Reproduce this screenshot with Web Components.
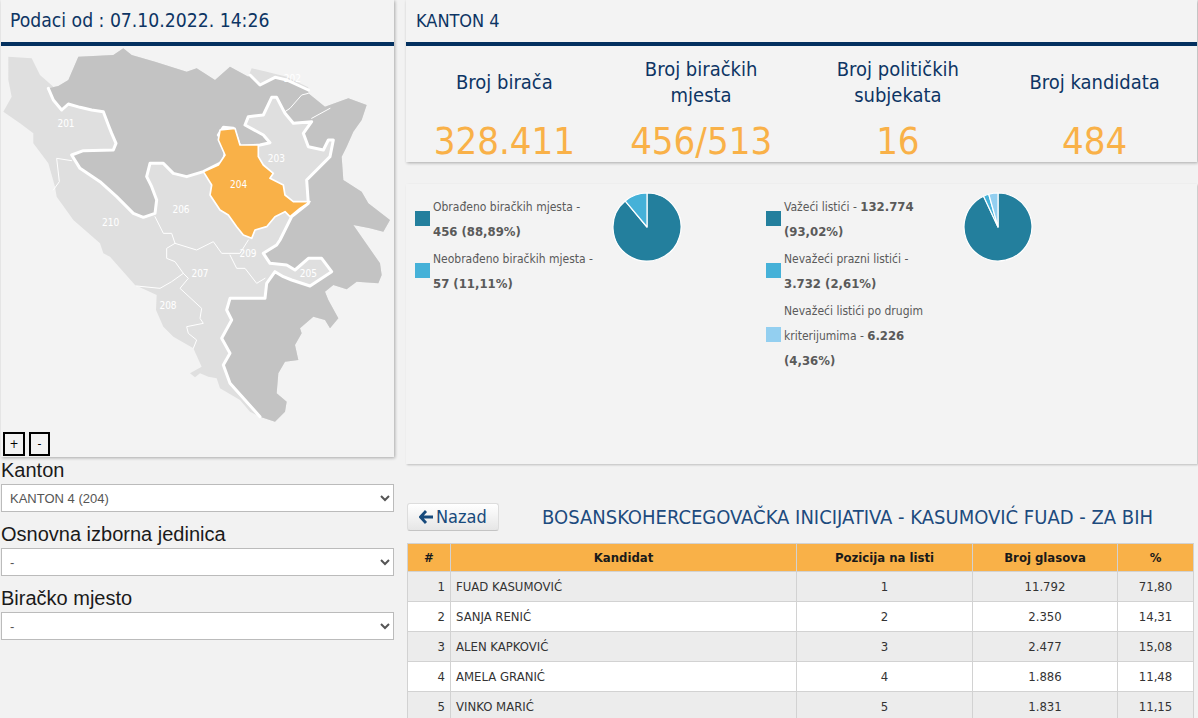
<!DOCTYPE html>
<html lang="bs">
<head>
<meta charset="utf-8">
<title>Izbori</title>
<style>
  html, body { margin: 0; height: 718px; overflow: hidden; background: #f2f2f2; }
  body { font-family: "DejaVu Sans Condensed", "DejaVu Sans", sans-serif; font-size: 12px; color: #555; }
  #page { display: grid; grid-template-columns: 393px 790px; column-gap: 13px; padding-left: 1px; align-items: start; }
  #left { display: flex; flex-direction: column; }
  #right { display: flex; flex-direction: column; margin-left: -1px; }
  b { font-weight: bold; font-size: 13px; line-height: 1; }
</style>
</head>
<body>
<div id="page">
  <div id="left">
    <info-panel heading="Podaci od : 07.10.2022. 14:26" big>
      <map-view></map-view>
    </info-panel>
    <select-field label="Kanton" value="KANTON 4 (204)"></select-field>
    <select-field label="Osnovna izborna jedinica" value="-"></select-field>
    <select-field label="Biračko mjesto" value="-"></select-field>
  </div>
  <div id="right">
    <info-panel heading="KANTON 4">
      <stat-row>
        <stat-item value="328.411">Broj birača</stat-item>
        <stat-item value="456/513">Broj biračkih<br>mjesta</stat-item>
        <stat-item value="16">Broj političkih<br>subjekata</stat-item>
        <stat-item value="484">Broj kandidata</stat-item>
      </stat-row>
    </info-panel>
    <chart-panel>
      <chart-block values="456,57">
        <legend-item color="#237f9d">Obrađeno biračkih mjesta -<br><b>456 (88,89%)</b></legend-item>
        <legend-item color="#45b1d8">Neobrađeno biračkih mjesta -<br><b>57 (11,11%)</b></legend-item>
      </chart-block>
      <chart-block values="132774,3732,6226">
        <legend-item color="#237f9d">Važeći listići - <b>132.774</b><br><b>(93,02%)</b></legend-item>
        <legend-item color="#45b1d8">Nevažeći prazni listići -<br><b>3.732 (2,61%)</b></legend-item>
        <legend-item color="#93cff0">Nevažeći listići po drugim<br>kriterijumima - <b>6.226</b><br><b>(4,36%)</b></legend-item>
      </chart-block>
    </chart-panel>
    <result-head>BOSANSKOHERCEGOVAČKA INICIJATIVA - KASUMOVIĆ FUAD - ZA BIH</result-head>
    <candidate-table></candidate-table>
  </div>
</div>

<script>
const panelTemplate = document.createElement('template');
panelTemplate.innerHTML = `
  <style>
    :host { display: block; background: #f3f3f3; box-shadow: 1px 1px 3px rgb(0 0 0 / 30%); }
    .head { height: 40px; box-sizing: border-box; margin-bottom: 2px; padding: 0 10px; display: flex; align-items: center;
      font-size: 18px; color: #0d3564; }
    :host([big]) .head { font-size: 19.2px; padding-left: 9px; }
    .rule { height: 4px; background: #03305f; }
  </style>
  <div class="head"></div>
  <div class="rule"></div>
  <slot></slot>
`;
class InfoPanel extends HTMLElement {
  constructor() {
    super();
    this.attachShadow({ mode: 'open' });
    this.shadowRoot.appendChild(panelTemplate.content.cloneNode(true));
    this.shadowRoot.querySelector('.head').textContent = this.getAttribute('heading');
  }
}
customElements.define('info-panel', InfoPanel);

// map coordinates are 3x page pixels
const northEdge = [145,265,175,258,205,240,235,170,340,165,370,145,395,165,465,185,560,215,590,205,645,240,690,200,745,230];
const brckoLine = [750,225,780,255,825,232,860,240,925,270];
const brckoOuter = [755,205,800,215,860,230,925,262];
const eastEdge = [925,280,975,320,1045,295,1100,315,1085,360,1060,395,1040,440,1025,470,1030,540,1085,575,1105,610,1170,660,1150,695,1110,685,1060,675,1140,790,1145,825,1135,850,1070,845,1040,868,1000,855,975,875,985,900,1015,955,990,985,975,960,940,950,900,985,905,1000,885,1035,895,1080,855,1085,835,1120,830,1180,860,1205,855,1235,825,1265,780,1250];
const westEdge = [750,1235,720,1200,660,1165,650,1135,625,1130,600,1120,585,1132,570,1120,605,1100,580,1045,520,1010,490,980,468,930,470,885,405,855,330,770,310,760,300,730,220,660,170,590,165,560,145,490,100,430,100,400,60,370,10,335,35,290,25,240,25,170,95,175,120,225,160,260];
const entityLine = [145,265,160,300,185,330,205,312,240,322,275,330,310,335,325,375,335,400,348,430,340,450,250,452,215,465,240,505,300,545,350,590,400,640,430,652,465,640,470,600,455,560,440,530,450,490,490,490,520,520,560,530,610,515,670,485,680,440,655,405,670,382,700,385,720,440,780,435,810,428,790,405,735,375,745,350,790,345,815,292,830,292,855,340,880,370,935,365,910,400,925,440,970,450,985,420,1000,420,990,470,920,540,925,610,875,650,840,720,830,735,790,760,810,790,860,795,885,810,925,775,965,775,995,815,930,858,875,840,850,830,825,815,800,850,795,895,745,895,690,895,680,930,695,960,665,1015,690,1060,670,1095,690,1150,780,1250];
const thinLines = [
  [215,482,170,475,178,545,160,570],
  [465,650,490,700,515,700,525,730,590,750,640,725,665,760,720,760,745,720],
  [525,730,500,745,500,775,525,785,550,820,515,845,480,865,410,858],
  [550,820,565,835,540,865,605,925,600,955,610,970,560,980,565,1000,590,1020,580,1045],
  [690,765,710,805,735,805,770,850,795,835],
  [925,280,905,285,870,325,855,335],
  [935,355,990,325]
];
const selectedCanton = [610,515,655,495,675,465,655,420,660,390,705,385,720,435,775,435,775,470,790,495,820,520,810,535,850,555,855,585,880,605,930,605,900,625,870,650,855,635,825,650,800,680,765,690,755,715,730,705,710,680,685,645,660,630,630,585,635,555];
const mapLabels = [['201',198,380],['202',877,246],['203',829,486],['204',716,563],['205',925,830],['206',543,638],['207',600,830],['208',504,926],['209',744,772],['210',332,678]];

function reversedPairs(arr) {
  let out = [];
  for (let i = arr.length - 2; i >= 0; i -= 2) out.push(arr[i], arr[i + 1]);
  return out;
}

class MapView extends HTMLElement {
  constructor() {
    super();
    this.attachShadow({ mode: 'open' });
    const country = [...northEdge, ...brckoOuter, ...eastEdge, ...westEdge].join(' ');
    const dark = [...northEdge, ...brckoLine, ...eastEdge, ...reversedPairs(entityLine)].join(' ');
    const thin = thinLines.map(l => `<polyline points="${l.join(' ')}" class="thin"/>`).join('');
    const labels = mapLabels.map(l => `<text x="${l[1]}" y="${l[2]}">${l[0]}</text>`).join('');
    this.shadowRoot.innerHTML = `
      <style>
        :host { display: block; }
        svg { display: block; width: 393px; height: 386px; }
        polyline { fill: none; stroke: #fff; stroke-linejoin: round; stroke-linecap: round; }
        .thin { stroke-width: 3; }
        .thick { stroke-width: 9; }
        text { fill: #fff; font: 30px "DejaVu Sans Condensed", "DejaVu Sans", sans-serif; text-anchor: middle; }
        .zoom { display: flex; gap: 4px; padding: 0 0 1px 2px; height: 25px; box-sizing: border-box; }
        button { width: 22px; height: 24px; padding: 0; margin: 0; background: #f3f3f3; border: 2px solid #000;
          font: 12px "DejaVu Sans Condensed", "DejaVu Sans", sans-serif; color: #000; }
        button + button { width: 21px; }
      </style>
      <svg viewBox="3 138 1179 1158">
        <polygon points="${country}" fill="#dfdfdf"/>
        <polygon points="${dark}" fill="#c3c3c3"/>
        ${thin}
        <polyline points="${brckoLine.join(' ')}" class="thick"/>
        <polyline points="${entityLine.join(' ')}" class="thick"/>
        <polygon points="${selectedCanton.join(' ')}" fill="#f9b148" stroke="#fff" stroke-width="5" stroke-linejoin="round"/>
        ${labels}
      </svg>
      <div class="zoom"><button>+</button><button>-</button></div>
    `;
  }
}
customElements.define('map-view', MapView);

const selectTemplate = document.createElement('template');
selectTemplate.innerHTML = `
  <style>
    :host { display: block; font-family: "Liberation Sans", Arial, sans-serif; height: 64px; }
    label { display: block; font-size: 20px; line-height: 27px; color: #1a1a1a; }
    select { display: block; width: 100%; height: 28px; box-sizing: border-box; padding: 0 4px; background: #fff;
      border: 1px solid #bbb; border-radius: 0; color: #555; font: 13px "Liberation Sans", Arial, sans-serif; outline: 0; }
  </style>
  <label></label>
  <select><option></option></select>
`;
class SelectField extends HTMLElement {
  constructor() {
    super();
    this.attachShadow({ mode: 'open' });
    this.shadowRoot.appendChild(selectTemplate.content.cloneNode(true));
    this.shadowRoot.querySelector('label').textContent = this.getAttribute('label');
    this.shadowRoot.querySelector('option').textContent = this.getAttribute('value');
  }
}
customElements.define('select-field', SelectField);

class StatRow extends HTMLElement {
  constructor() {
    super();
    this.attachShadow({ mode: 'open' }).innerHTML = `
      <style>:host { display: grid; grid-template-columns: repeat(4, 1fr); height: 116px; padding-right: 4px; }</style>
      <slot></slot>`;
  }
}
customElements.define('stat-row', StatRow);

const statTemplate = document.createElement('template');
statTemplate.innerHTML = `
  <style>
    :host { display: flex; flex-direction: column; text-align: center; }
    .title { height: 52px; margin-top: 10px; display: flex; align-items: center; justify-content: center;
      font-size: 20px; line-height: 26px; color: #0d3564; }
    .value { font-size: 38px; line-height: 54px; margin-top: 6px; color: #f9b148; }
  </style>
  <div class="title"><div><slot></slot></div></div>
  <div class="value"></div>
`;
class StatItem extends HTMLElement {
  constructor() {
    super();
    this.attachShadow({ mode: 'open' });
    this.shadowRoot.appendChild(statTemplate.content.cloneNode(true));
    this.shadowRoot.querySelector('.value').textContent = this.getAttribute('value');
  }
}
customElements.define('stat-item', StatItem);

class ChartPanel extends HTMLElement {
  constructor() {
    super();
    this.attachShadow({ mode: 'open' }).innerHTML = `
      <style>
        :host { display: flex; height: 280px; margin-top: 22px; background: #f3f3f3; box-shadow: 1px 1px 2px rgb(0 0 0 / 22%); }
      </style>
      <slot></slot>`;
  }
}
customElements.define('chart-panel', ChartPanel);

class ChartBlock extends HTMLElement {
  constructor() {
    super();
    const colors = ['#237f9d', '#45b1d8', '#93cff0'];
    const vals = this.getAttribute('values').split(',').map(Number);
    const total = vals.reduce((a, b) => a + b, 0);
    let start = 0, slices = '';
    const point = f => {
      const a = f * 2 * Math.PI;
      return (36 + 34 * Math.sin(a)).toFixed(2) + ' ' + (36 - 34 * Math.cos(a)).toFixed(2);
    };
    vals.forEach((v, i) => {
      const end = start + v / total;
      slices += `<path d="M36 36L${point(start)}A34 34 0 ${v / total > .5 ? 1 : 0} 1 ${point(end)}Z" fill="${colors[i]}" stroke="#fff" stroke-width="1.2" stroke-linejoin="round"/>`;
      start = end;
    });
    this.attachShadow({ mode: 'open' }).innerHTML = `
      <style>
        :host { display: flex; width: 351px; box-sizing: border-box; padding: 8px 0 0 9px; align-items: flex-start; }
        .legend { width: 196px; display: flex; flex-direction: column; }
        svg { display: block; width: 72px; height: 72px; margin-top: -1px; }
      </style>
      <div class="legend"><slot></slot></div>
      <svg viewBox="0 0 72 72">${slices}</svg>`;
  }
}
customElements.define('chart-block', ChartBlock);

const legendTemplate = document.createElement('template');
legendTemplate.innerHTML = `
  <style>
    :host { display: flex; align-items: center; gap: 3px; line-height: 25px; font-size: 12px; color: #5a5a5a; white-space: nowrap; }
    .swatch { width: 15px; height: 15px; flex: none; }
    .text { padding-top: 3px; margin-bottom: -1px; }
  </style>
  <span class="swatch"></span>
  <span class="text"><slot></slot></span>
`;
class LegendItem extends HTMLElement {
  constructor() {
    super();
    this.attachShadow({ mode: 'open' });
    this.shadowRoot.appendChild(legendTemplate.content.cloneNode(true));
    this.shadowRoot.querySelector('.swatch').style.background = this.getAttribute('color');
  }
}
customElements.define('legend-item', LegendItem);

class ResultHead extends HTMLElement {
  constructor() {
    super();
    this.attachShadow({ mode: 'open' }).innerHTML = `
      <style>
        :host { display: flex; align-items: center; height: 29px; margin: 38px 0 12px 1px; }
        button { display: flex; align-items: center; gap: 2px; width: 92px; height: 28px; box-sizing: border-box; padding: 0 0 0 11px;
          border: 1px solid #ddd; border-bottom-color: #c4c4c4; border-radius: 3px; background: linear-gradient(#fff, #e6e6e6);
          color: #174a7c; font: 18px "DejaVu Sans Condensed", "DejaVu Sans", sans-serif; }
        svg { width: 15px; height: 14px; display: block; }
        h2 { margin: 0 0 0 43px; font-weight: normal; font-size: 20px; color: #1d4b7e; white-space: nowrap; }
      </style>
      <button>
        <svg viewBox="0 0 15 14"><path d="M7 1 1.5 7 7 13M2 7H14" fill="none" stroke="#174a7c" stroke-width="2.8"/></svg>
        Nazad
      </button>
      <h2><slot></slot></h2>`;
  }
}
customElements.define('result-head', ResultHead);

const candidates = [
  ['FUAD KASUMOVIĆ', '1', '11.792', '71,80'],
  ['SANJA RENIĆ', '2', '2.350', '14,31'],
  ['ALEN KAPKOVIĆ', '3', '2.477', '15,08'],
  ['AMELA GRANIĆ', '4', '1.886', '11,48'],
  ['VINKO MARIĆ', '5', '1.831', '11,15']
];
class CandidateTable extends HTMLElement {
  constructor() {
    super();
    const rows = candidates.map((c, i) => `
      <tr><td class="n">${i + 1}</td><td class="l">${c[0]}</td><td>${c[1]}</td><td>${c[2]}</td><td>${c[3]}</td></tr>`).join('');
    this.attachShadow({ mode: 'open' }).innerHTML = `
      <style>
        :host { display: block; margin-left: 1px; width: 786px; }
        table { border-collapse: collapse; width: 786px; table-layout: fixed; font-size: 13px; color: #333; }
        th, td { border: 1px solid #d2d2d2; padding: 0 5px; text-align: center; box-sizing: border-box; }
        th { background: #f9b148; color: #1a1a1a; height: 28px; font-weight: bold; }
        td { height: 30px; }
        tr:nth-child(odd) td { background: #ececec; }
        tr:nth-child(even) td { background: #fff; }
        td.n { text-align: right; }
        td.l { text-align: left; }
      </style>
      <table>
        <colgroup><col style="width:43px"><col style="width:346px"><col style="width:176px"><col style="width:145px"><col style="width:76px"></colgroup>
        <thead><tr><th>#</th><th>Kandidat</th><th>Pozicija na listi</th><th>Broj glasova</th><th>%</th></tr></thead>
        <tbody>${rows}</tbody>
      </table>`;
  }
}
customElements.define('candidate-table', CandidateTable);
</script>
</body>
</html>
